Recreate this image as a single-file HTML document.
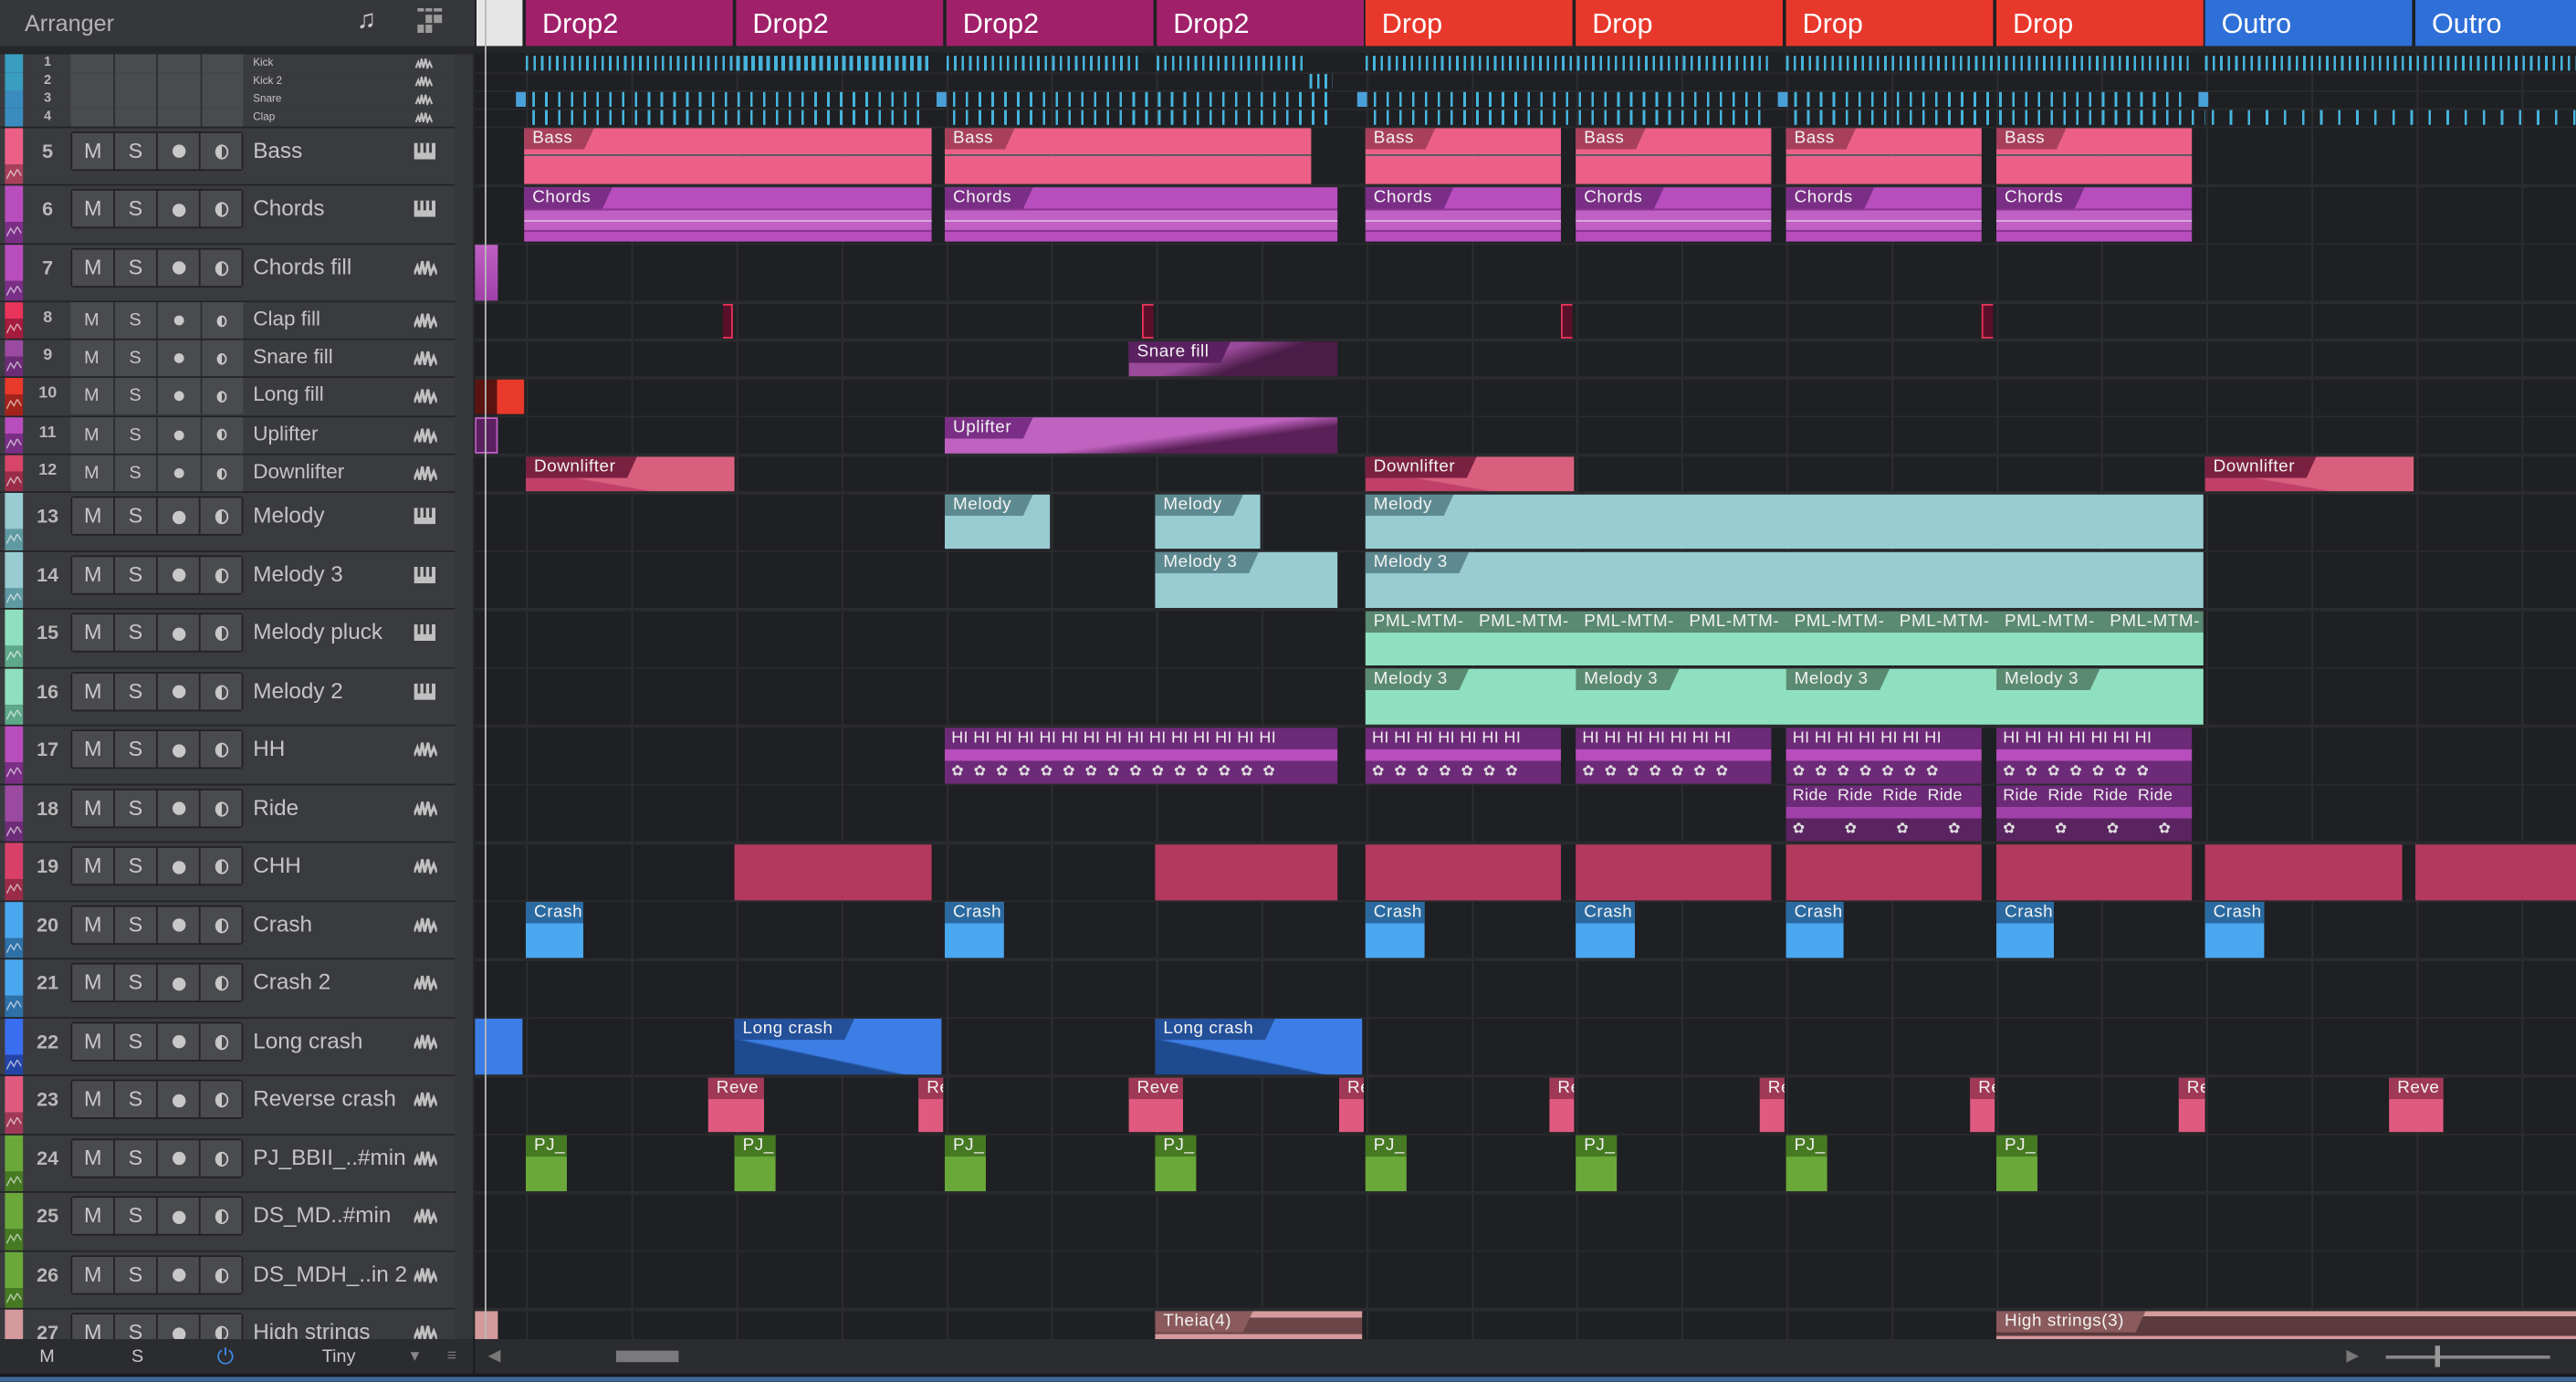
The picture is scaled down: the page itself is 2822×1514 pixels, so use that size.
<!DOCTYPE html>
<html><head><meta charset="utf-8"><style>
*{margin:0;padding:0;box-sizing:border-box}
body{width:2822px;height:1514px;overflow:hidden;background:#1f2023;font-family:"Liberation Sans",sans-serif}
#w{position:absolute;left:0;top:0;width:1568px;height:841px;transform:scale(1.8);transform-origin:0 0;background:#1f2023;overflow:hidden}
.tl{position:absolute;left:289px;top:32px;width:1279px;height:783px;background-color:#1f2023;background-image:repeating-linear-gradient(90deg,transparent 0 30.5px,#2e2f33 30.5px 31.5px,transparent 31.5px 63.9px);background-position:1px 0}
.hs{position:absolute;left:0;width:1568px;height:1.5px;background:#2a2b2e}
.tr{position:absolute;left:0;width:277px;background:#3a3b3f}
.sep{position:absolute;left:277px;width:11px;background:#35363a}
.st{position:absolute;left:3px;width:11px}
.n{position:absolute;left:16px;width:26px;text-align:center;color:#b8b8b8;font-weight:bold;font-size:12px}
.bx{position:absolute;left:43px;width:105px;display:flex;border:1px solid #222;border-radius:2px;background:#222}
.bx u{flex:1;text-decoration:none;background:#4a4b4f;color:#c8c8c8;text-align:center;margin-right:1px;font-size:13px}
.bx u:last-child{margin-right:0}
.sm .bx{border:none;background:#2c2d30}
.sm .bx u{font-size:11px}
.nm{position:absolute;left:154px;color:#c4c4c4;font-size:13.5px;white-space:nowrap}
.ic{position:absolute;left:252px}
.c{position:absolute;overflow:hidden}
.c i{position:absolute;left:0;top:0;height:13px;padding:0 13px 0 5px;font-style:normal;font-size:10.5px;line-height:13px;color:#f2f2f2;white-space:nowrap;clip-path:polygon(0 0,100% 0,calc(100% - 6px) 100%,0 100%);letter-spacing:.3px}
.sec{position:absolute;top:0;height:28px;width:126px;color:#fff;font-size:17px;line-height:29px;padding-left:10px}
.dot{display:inline-block;width:8px;height:8px;border-radius:50%;background:#c8c8c8;vertical-align:middle}
.sm .dot{width:6px;height:6px}
.mon{display:inline-block;width:8px;height:9px;border-radius:50%;border:1.3px solid #c8c8c8;background:linear-gradient(90deg,#c8c8c8 50%,transparent 50%);vertical-align:middle}
.sm .mon{width:6px;height:7px}
.hh{font-size:10px;color:#eee;white-space:nowrap;position:absolute;left:4px;top:1px;letter-spacing:.2px}
.gear{font-size:9px;color:#ddd;white-space:nowrap;position:absolute;left:4px;bottom:2px;letter-spacing:6px}
.sq{position:absolute;left:4px;width:9px;height:6px}
</style></head><body><div id="w">
<svg width="0" height="0" style="position:absolute"><defs>
<symbol id="wv" viewBox="0 0 14 10"><path d="M0 9 L2 4 L3.5 9 L5 1 L6.5 9 L8.5 1 L10 9 L12 4 L14 9" fill="none" stroke="#c0c0c0" stroke-width="1.6"/></symbol>
<symbol id="pn" viewBox="0 0 13 10"><rect x="0" y="0" width="13" height="10" fill="#c0c0c0"/><path d="M3 0V6M6.5 0V6M10 0V6" stroke="#3a3b3f" stroke-width="1.6"/></symbol>
<symbol id="sg" viewBox="0 0 9 6"><path d="M0 6 L2.5 1 L4.5 4 L6.5 0 L9 4" fill="none" stroke="#fff" stroke-opacity=".6" stroke-width=".8"/></symbol>
</defs></svg>
<!-- header -->
<div style="position:absolute;left:0;top:0;width:289px;height:28px;background:#36373b"></div>
<div style="position:absolute;left:15px;top:6px;color:#b4b4b4;font-size:14px">Arranger</div>
<div style="position:absolute;left:217px;top:4px;color:#c8c8c8;font-size:16px">♫</div>
<svg style="position:absolute;left:254px;top:5px" width="16" height="16"><g fill="#9a9a9a"><rect x="0" y="0" width="4" height="2"/><rect x="5" y="0" width="4" height="2"/><rect x="10" y="0" width="5" height="2"/><rect x="5" y="4" width="4" height="5"/><rect x="10" y="4" width="5" height="5"/><rect x="0" y="10" width="4" height="5"/><rect x="5" y="10" width="4" height="5"/></g></svg>
<div style="position:absolute;left:0;top:28px;width:1568px;height:5px;background:#26272a"></div>
<div style="position:absolute;left:290px;top:0;width:28px;height:28px;background:#e6e6e6"></div>
<div class="sec" style="left:320px;background:#a0206a">Drop2</div>
<div class="sec" style="left:448px;background:#a0206a">Drop2</div>
<div class="sec" style="left:576px;background:#a0206a">Drop2</div>
<div class="sec" style="left:704px;background:#a0206a">Drop2</div>
<div class="sec" style="left:831px;background:#e8382c">Drop</div>
<div class="sec" style="left:959px;background:#e8382c">Drop</div>
<div class="sec" style="left:1087px;background:#e8382c">Drop</div>
<div class="sec" style="left:1215px;background:#e8382c">Drop</div>
<div class="sec" style="left:1342px;background:#2f6fd8">Outro</div>
<div class="sec" style="left:1470px;width:98px;background:#2f6fd8">Outro</div>

<div class="tl"></div>
<div class="hs" style="top:43.5px"></div><div class="hs" style="top:54.5px"></div><div class="hs" style="top:65.5px"></div><div class="hs" style="top:76.5px"></div><div class="hs" style="top:112px"></div><div class="hs" style="top:147.5px"></div><div class="hs" style="top:183px"></div><div class="hs" style="top:206px"></div><div class="hs" style="top:229px"></div><div class="hs" style="top:252.5px"></div><div class="hs" style="top:276px"></div><div class="hs" style="top:299px"></div><div class="hs" style="top:334.5px"></div><div class="hs" style="top:370px"></div><div class="hs" style="top:405.5px"></div><div class="hs" style="top:441px"></div><div class="hs" style="top:476.5px"></div><div class="hs" style="top:512px"></div><div class="hs" style="top:547.5px"></div><div class="hs" style="top:583px"></div><div class="hs" style="top:618.5px"></div><div class="hs" style="top:654px"></div><div class="hs" style="top:689.5px"></div><div class="hs" style="top:725px"></div><div class="hs" style="top:760.5px"></div><div class="hs" style="top:796px"></div>

<!-- drum ticks rows 1-4 -->
<div class="c" style="left:320px;top:34px;width:245px;height:9px;background:repeating-linear-gradient(90deg,#46b4dc 0 1.5px,transparent 1.5px 4.6px)"></div>
<div class="c" style="left:448px;top:34px;width:117px;height:9px;background:repeating-linear-gradient(90deg,#46b4dc 0 1.5px,transparent 1.5px 4.6px)"></div>
<div class="c" style="left:576px;top:34px;width:118px;height:9px;background:repeating-linear-gradient(90deg,#46b4dc 0 1.5px,transparent 1.5px 4.6px)"></div>
<div class="c" style="left:704px;top:34px;width:92px;height:9px;background:repeating-linear-gradient(90deg,#46b4dc 0 1.5px,transparent 1.5px 4.6px)"></div>
<div class="c" style="left:797px;top:45px;width:14px;height:9px;background:repeating-linear-gradient(90deg,#46b4dc 0 1.5px,transparent 1.5px 4.6px)"></div>
<div class="c" style="left:831px;top:34px;width:245px;height:9px;background:repeating-linear-gradient(90deg,#46b4dc 0 1.5px,transparent 1.5px 4.6px)"></div>
<div class="c" style="left:1087px;top:34px;width:245px;height:9px;background:repeating-linear-gradient(90deg,#46b4dc 0 1.5px,transparent 1.5px 4.6px)"></div>
<div class="c" style="left:1342px;top:34px;width:226px;height:9px;background:repeating-linear-gradient(90deg,#46b4dc 0 1.5px,transparent 1.5px 4.6px)"></div>
<div class="c" style="left:314px;top:56px;width:6px;height:9px;background:#4aa0d8"></div>
<div class="c" style="left:324px;top:56px;width:240px;height:9px;background:repeating-linear-gradient(90deg,#46b4dc 0 1.5px,transparent 1.5px 7.8px)"></div>
<div class="c" style="left:570px;top:56px;width:6px;height:9px;background:#4aa0d8"></div>
<div class="c" style="left:580px;top:56px;width:230px;height:9px;background:repeating-linear-gradient(90deg,#46b4dc 0 1.5px,transparent 1.5px 7.8px)"></div>
<div class="c" style="left:826px;top:56px;width:6px;height:9px;background:#4aa0d8"></div>
<div class="c" style="left:836px;top:56px;width:240px;height:9px;background:repeating-linear-gradient(90deg,#46b4dc 0 1.5px,transparent 1.5px 7.8px)"></div>
<div class="c" style="left:1082px;top:56px;width:6px;height:9px;background:#4aa0d8"></div>
<div class="c" style="left:1092px;top:56px;width:240px;height:9px;background:repeating-linear-gradient(90deg,#46b4dc 0 1.5px,transparent 1.5px 7.8px)"></div>
<div class="c" style="left:1338px;top:56px;width:6px;height:9px;background:#4aa0d8"></div>
<div class="c" style="left:324px;top:67px;width:240px;height:9px;background:repeating-linear-gradient(90deg,#46b4dc 0 1.5px,transparent 1.5px 7.8px)"></div>
<div class="c" style="left:580px;top:67px;width:230px;height:9px;background:repeating-linear-gradient(90deg,#46b4dc 0 1.5px,transparent 1.5px 7.8px)"></div>
<div class="c" style="left:836px;top:67px;width:240px;height:9px;background:repeating-linear-gradient(90deg,#46b4dc 0 1.5px,transparent 1.5px 7.8px)"></div>
<div class="c" style="left:1092px;top:67px;width:250px;height:9px;background:repeating-linear-gradient(90deg,#46b4dc 0 1.5px,transparent 1.5px 7.8px)"></div>
<div class="c" style="left:1346px;top:67px;width:222px;height:9px;background:repeating-linear-gradient(90deg,#46b4dc 0 1.5px,transparent 1.5px 11px)"></div>

<!-- Bass row 5 -->
<div class="c" style="left:319px;top:78px;width:248px;height:34px;background:linear-gradient(#ec6088 0 16px,#fff4 16px 17px,#ec6088 17px)"><i style="background:#a8405c">Bass</i></div>
<div class="c" style="left:575px;top:78px;width:223px;height:34px;background:linear-gradient(#ec6088 0 16px,#fff4 16px 17px,#ec6088 17px)"><i style="background:#a8405c">Bass</i></div>
<div class="c" style="left:831px;top:78px;width:119px;height:34px;background:linear-gradient(#ec6088 0 16px,#fff4 16px 17px,#ec6088 17px)"><i style="background:#a8405c">Bass</i></div>
<div class="c" style="left:959px;top:78px;width:119px;height:34px;background:linear-gradient(#ec6088 0 16px,#fff4 16px 17px,#ec6088 17px)"><i style="background:#a8405c">Bass</i></div>
<div class="c" style="left:1087px;top:78px;width:119px;height:34px;background:linear-gradient(#ec6088 0 16px,#fff4 16px 17px,#ec6088 17px)"><i style="background:#a8405c">Bass</i></div>
<div class="c" style="left:1215px;top:78px;width:119px;height:34px;background:linear-gradient(#ec6088 0 16px,#fff4 16px 17px,#ec6088 17px)"><i style="background:#a8405c">Bass</i></div>
<!-- Chords row 6 -->
<div class="c" style="left:319px;top:114px;width:248px;height:33px;background:linear-gradient(#b84dbd 0 13px,#8a3490 13px 14px,#c060c4 14px 20px,#d8a8e0 20px 21px,#c060c4 21px 26px,#8a3490 26px 27px,#b84dbd 27px)"><i style="background:#7a2e86">Chords</i></div>
<div class="c" style="left:575px;top:114px;width:239px;height:33px;background:linear-gradient(#b84dbd 0 13px,#8a3490 13px 14px,#c060c4 14px 20px,#d8a8e0 20px 21px,#c060c4 21px 26px,#8a3490 26px 27px,#b84dbd 27px)"><i style="background:#7a2e86">Chords</i></div>
<div class="c" style="left:831px;top:114px;width:119px;height:33px;background:linear-gradient(#b84dbd 0 13px,#8a3490 13px 14px,#c060c4 14px 20px,#d8a8e0 20px 21px,#c060c4 21px 26px,#8a3490 26px 27px,#b84dbd 27px)"><i style="background:#7a2e86">Chords</i></div>
<div class="c" style="left:959px;top:114px;width:119px;height:33px;background:linear-gradient(#b84dbd 0 13px,#8a3490 13px 14px,#c060c4 14px 20px,#d8a8e0 20px 21px,#c060c4 21px 26px,#8a3490 26px 27px,#b84dbd 27px)"><i style="background:#7a2e86">Chords</i></div>
<div class="c" style="left:1087px;top:114px;width:119px;height:33px;background:linear-gradient(#b84dbd 0 13px,#8a3490 13px 14px,#c060c4 14px 20px,#d8a8e0 20px 21px,#c060c4 21px 26px,#8a3490 26px 27px,#b84dbd 27px)"><i style="background:#7a2e86">Chords</i></div>
<div class="c" style="left:1215px;top:114px;width:119px;height:33px;background:linear-gradient(#b84dbd 0 13px,#8a3490 13px 14px,#c060c4 14px 20px,#d8a8e0 20px 21px,#c060c4 21px 26px,#8a3490 26px 27px,#b84dbd 27px)"><i style="background:#7a2e86">Chords</i></div>
<div class="c" style="left:289px;top:149px;width:14px;height:34px;background:linear-gradient(#c060c4,#a040a8)"></div>
<div class="c" style="left:440px;top:185px;width:6px;height:21px;border:1.5px solid #e8335a;border-left:none;background:#5a1028"></div>
<div class="c" style="left:695px;top:185px;width:7px;height:21px;border:1.5px solid #e8335a;border-right:none;background:#5a1028"></div>
<div class="c" style="left:950px;top:185px;width:7px;height:21px;border:1.5px solid #e8335a;border-right:none;background:#5a1028"></div>
<div class="c" style="left:1206px;top:185px;width:7px;height:21px;border:1.5px solid #e8335a;border-right:none;background:#5a1028"></div>
<div class="c" style="left:687px;top:208px;width:127px;height:21px;background:linear-gradient(160deg,#9a4a9a 40%,#4a1c48 60%)"><i style="background:#5a2060">Snare fill</i></div>
<div class="c" style="left:289px;top:231px;width:30px;height:21px;background:linear-gradient(90deg,#5a1410 0 45%,#e8392b 45%)"></div>
<div class="c" style="left:289px;top:254px;width:14px;height:22px;background:#5a2060;border:1.5px solid #c060c4"></div>
<div class="c" style="left:575px;top:254px;width:239px;height:22px;background:linear-gradient(172deg,#c062c0 55%,#5a2058 70%)"><i style="background:#7a2e86">Uplifter</i></div>
<div class="c" style="left:320px;top:278px;width:127px;height:21px;background:linear-gradient(10deg,#c0406a 30%,#d8607e 32%)"><i style="background:#7a2040">Downlifter</i></div>
<div class="c" style="left:831px;top:278px;width:127px;height:21px;background:linear-gradient(10deg,#c0406a 30%,#d8607e 32%)"><i style="background:#7a2040">Downlifter</i></div>
<div class="c" style="left:1342px;top:278px;width:127px;height:21px;background:linear-gradient(10deg,#c0406a 30%,#d8607e 32%)"><i style="background:#7a2040">Downlifter</i></div>
<div class="c" style="left:575px;top:301px;width:64px;height:33px;background:#99cbd3"><i style="background:#5d8a90">Melody</i></div>
<div class="c" style="left:703px;top:301px;width:64px;height:33px;background:#99cbd3"><i style="background:#5d8a90">Melody</i></div>
<div class="c" style="left:831px;top:301px;width:510px;height:33px;background:#99cbd3"><i style="background:#5d8a90">Melody</i></div>
<div class="c" style="left:703px;top:336px;width:111px;height:34px;background:#99cbd3"><i style="background:#5d8a90">Melody 3</i></div>
<div class="c" style="left:831px;top:336px;width:510px;height:34px;background:#99cbd3"><i style="background:#5d8a90">Melody 3</i></div>
<div class="c" style="left:831px;top:372px;width:510px;height:33px;background:linear-gradient(#5a8a72 0 13px,#8fe0c0 13px)">
<i style="left:0;background:none">PML-MTM-</i><i style="left:64px;background:none">PML-MTM-</i><i style="left:128px;background:none">PML-MTM-</i><i style="left:192px;background:none">PML-MTM-</i><i style="left:256px;background:none">PML-MTM-</i><i style="left:320px;background:none">PML-MTM-</i><i style="left:384px;background:none">PML-MTM-</i><i style="left:448px;background:none">PML-MTM-</i></div>
<div class="c" style="left:831px;top:407px;width:510px;height:34px;background:#8fe0c0">
<i style="background:#5a8a72">Melody 3</i><i style="left:128px;background:#5a8a72">Melody 3</i><i style="left:256px;background:#5a8a72">Melody 3</i><i style="left:384px;background:#5a8a72">Melody 3</i></div>
<div class="c" style="left:575px;top:443px;width:239px;height:34px;background:linear-gradient(#6d2a78 0 13px,#b84dbd 13px 20px,#6d2a78 20px)"><span class="hh">HI HI HI HI HI HI HI HI HI HI HI HI HI HI HI</span><span class="gear">✿✿✿✿✿✿✿✿✿✿✿✿✿✿✿</span></div>
<div class="c" style="left:831px;top:443px;width:119px;height:34px;background:linear-gradient(#6d2a78 0 13px,#b84dbd 13px 20px,#6d2a78 20px)"><span class="hh">HI HI HI HI HI HI HI</span><span class="gear">✿✿✿✿✿✿✿</span></div>
<div class="c" style="left:959px;top:443px;width:119px;height:34px;background:linear-gradient(#6d2a78 0 13px,#b84dbd 13px 20px,#6d2a78 20px)"><span class="hh">HI HI HI HI HI HI HI</span><span class="gear">✿✿✿✿✿✿✿</span></div>
<div class="c" style="left:1087px;top:443px;width:119px;height:34px;background:linear-gradient(#6d2a78 0 13px,#b84dbd 13px 20px,#6d2a78 20px)"><span class="hh">HI HI HI HI HI HI HI</span><span class="gear">✿✿✿✿✿✿✿</span></div>
<div class="c" style="left:1215px;top:443px;width:119px;height:34px;background:linear-gradient(#6d2a78 0 13px,#b84dbd 13px 20px,#6d2a78 20px)"><span class="hh">HI HI HI HI HI HI HI</span><span class="gear">✿✿✿✿✿✿✿</span></div>
<div class="c" style="left:1087px;top:478px;width:119px;height:34px;background:linear-gradient(#6d2a78 0 13px,#a040a8 13px 20px,#5a2460 20px)"><span class="hh" style="word-spacing:3px">Ride Ride Ride Ride</span><span class="gear" style="letter-spacing:24px">✿✿✿✿</span></div>
<div class="c" style="left:1215px;top:478px;width:119px;height:34px;background:linear-gradient(#6d2a78 0 13px,#a040a8 13px 20px,#5a2460 20px)"><span class="hh" style="word-spacing:3px">Ride Ride Ride Ride</span><span class="gear" style="letter-spacing:24px">✿✿✿✿</span></div>
<div class="c" style="left:447px;top:514px;width:120px;height:34px;background:#b33a5e"></div>
<div class="c" style="left:703px;top:514px;width:111px;height:34px;background:#b33a5e"></div>
<div class="c" style="left:831px;top:514px;width:119px;height:34px;background:#b33a5e"></div>
<div class="c" style="left:959px;top:514px;width:119px;height:34px;background:#b33a5e"></div>
<div class="c" style="left:1087px;top:514px;width:119px;height:34px;background:#b33a5e"></div>
<div class="c" style="left:1215px;top:514px;width:119px;height:34px;background:#b33a5e"></div>
<div class="c" style="left:1342px;top:514px;width:120px;height:34px;background:#b33a5e"></div>
<div class="c" style="left:1470px;top:514px;width:98px;height:34px;background:#b33a5e"></div>
<div class="c" style="left:320px;top:549px;width:35px;height:34px;background:#4aa8f0"><i style="background:#2a6aa0">Crash</i></div>
<div class="c" style="left:575px;top:549px;width:36px;height:34px;background:#4aa8f0"><i style="background:#2a6aa0">Crash</i></div>
<div class="c" style="left:831px;top:549px;width:36px;height:34px;background:#4aa8f0"><i style="background:#2a6aa0">Crash</i></div>
<div class="c" style="left:959px;top:549px;width:36px;height:34px;background:#4aa8f0"><i style="background:#2a6aa0">Crash</i></div>
<div class="c" style="left:1087px;top:549px;width:35px;height:34px;background:#4aa8f0"><i style="background:#2a6aa0">Crash</i></div>
<div class="c" style="left:1215px;top:549px;width:35px;height:34px;background:#4aa8f0"><i style="background:#2a6aa0">Crash</i></div>
<div class="c" style="left:1342px;top:549px;width:36px;height:34px;background:#4aa8f0"><i style="background:#2a6aa0">Crash</i></div>
<div class="c" style="left:289px;top:620px;width:29px;height:34px;background:#3c7ee6"></div>
<div class="c" style="left:447px;top:620px;width:126px;height:34px;background:linear-gradient(12deg,#1e4a90 35%,#3c7ee6 37%)"><i style="background:#24509a">Long crash</i></div>
<div class="c" style="left:703px;top:620px;width:126px;height:34px;background:linear-gradient(12deg,#1e4a90 35%,#3c7ee6 37%)"><i style="background:#24509a">Long crash</i></div>
<div class="c" style="left:431px;top:656px;width:34px;height:33px;background:#e05a80"><i style="background:#a03858">Reve</i></div>
<div class="c" style="left:559px;top:656px;width:15px;height:33px;background:#e05a80"><i style="background:#a03858">Re</i></div>
<div class="c" style="left:687px;top:656px;width:33px;height:33px;background:#e05a80"><i style="background:#a03858">Reve</i></div>
<div class="c" style="left:815px;top:656px;width:15px;height:33px;background:#e05a80"><i style="background:#a03858">Re</i></div>
<div class="c" style="left:943px;top:656px;width:15px;height:33px;background:#e05a80"><i style="background:#a03858">Re</i></div>
<div class="c" style="left:1071px;top:656px;width:15px;height:33px;background:#e05a80"><i style="background:#a03858">Re</i></div>
<div class="c" style="left:1199px;top:656px;width:15px;height:33px;background:#e05a80"><i style="background:#a03858">Re</i></div>
<div class="c" style="left:1326px;top:656px;width:16px;height:33px;background:#e05a80"><i style="background:#a03858">Re</i></div>
<div class="c" style="left:1454px;top:656px;width:33px;height:33px;background:#e05a80"><i style="background:#a03858">Reve</i></div>
<div class="c" style="left:320px;top:691px;width:25px;height:34px;background:#6aa83a"><i style="background:#467a22">PJ_</i></div>
<div class="c" style="left:447px;top:691px;width:25px;height:34px;background:#6aa83a"><i style="background:#467a22">PJ_</i></div>
<div class="c" style="left:575px;top:691px;width:25px;height:34px;background:#6aa83a"><i style="background:#467a22">PJ_</i></div>
<div class="c" style="left:703px;top:691px;width:25px;height:34px;background:#6aa83a"><i style="background:#467a22">PJ_</i></div>
<div class="c" style="left:831px;top:691px;width:25px;height:34px;background:#6aa83a"><i style="background:#467a22">PJ_</i></div>
<div class="c" style="left:959px;top:691px;width:25px;height:34px;background:#6aa83a"><i style="background:#467a22">PJ_</i></div>
<div class="c" style="left:1087px;top:691px;width:25px;height:34px;background:#6aa83a"><i style="background:#467a22">PJ_</i></div>
<div class="c" style="left:1215px;top:691px;width:25px;height:34px;background:#6aa83a"><i style="background:#467a22">PJ_</i></div>
<div class="c" style="left:289px;top:798px;width:14px;height:17px;background:#d49a9c"></div>
<div class="c" style="left:703px;top:798px;width:126px;height:17px;background:linear-gradient(#d49a9c 0 4px,#6a4446 4px 14px,#d49a9c 14px)"><i style="background:#8a5a5c">Theia(4)</i></div>
<div class="c" style="left:1215px;top:798px;width:353px;height:17px;background:linear-gradient(#d49a9c 0 3px,#5a3a3c 3px 15px,#d49a9c 15px)"><i style="background:#8a5a5c">High strings(3)</i></div>

<div style="position:absolute;left:295px;top:0;width:1px;height:815px;background:#b8b8b8"></div>

<!-- track panel -->
<div style="position:absolute;left:0;top:33px;width:289px;height:782px;background:#232427"></div>
<div class="sep" style="top:33px;height:782px"></div>

<div class="tr" style="top:33px;height:10.5px"><b class="st" style="top:0;height:10.5px;background:#3a9ec0"></b><span class="n" style="font-size:8px;line-height:10.5px">1</span><div class="bx" style="top:0;height:10.5px;border:none;background:#2c2d30"><u></u><u></u><u></u><u></u></div><span class="nm" style="font-size:6.5px;line-height:11px">Kick</span><svg class="ic" style="top:2px" width="12" height="7"><use href="#wv"/></svg></div>
<div class="tr" style="top:44px;height:10.5px"><b class="st" style="top:0;height:10.5px;background:#3a9ec0"></b><span class="n" style="font-size:8px;line-height:10.5px">2</span><div class="bx" style="top:0;height:10.5px;border:none;background:#2c2d30"><u></u><u></u><u></u><u></u></div><span class="nm" style="font-size:6.5px;line-height:11px">Kick 2</span><svg class="ic" style="top:2px" width="12" height="7"><use href="#wv"/></svg></div>
<div class="tr" style="top:55px;height:10.5px"><b class="st" style="top:0;height:10.5px;background:#3a8cc0"></b><span class="n" style="font-size:8px;line-height:10.5px">3</span><div class="bx" style="top:0;height:10.5px;border:none;background:#2c2d30"><u></u><u></u><u></u><u></u></div><span class="nm" style="font-size:6.5px;line-height:11px">Snare</span><svg class="ic" style="top:2px" width="12" height="7"><use href="#wv"/></svg></div>
<div class="tr" style="top:66px;height:10.5px"><b class="st" style="top:0;height:10.5px;background:#3a8cc0"></b><span class="n" style="font-size:8px;line-height:10.5px">4</span><div class="bx" style="top:0;height:10.5px;border:none;background:#2c2d30"><u></u><u></u><u></u><u></u></div><span class="nm" style="font-size:6.5px;line-height:11px">Clap</span><svg class="ic" style="top:2px" width="12" height="7"><use href="#wv"/></svg></div>

<div class="tr" style="top:77.5px;height:34.5px"><b class="st" style="top:0;height:22px;background:#ec6088"></b><b class="st" style="top:22px;height:12.5px;background:#a8405c"></b><svg class="sq" style="top:25px"><use href="#sg"/></svg><span class="n" style="top:7px">5</span><div class="bx" style="top:2px;height:24px"><u style="line-height:22px">M</u><u style="line-height:22px">S</u><u style="line-height:22px"><span class="dot"></span></u><u style="line-height:22px"><span class="mon"></span></u></div><span class="nm" style="top:6px">Bass</span><svg class="ic" style="top:9px" width="13" height="10"><use href="#pn"/></svg></div>
<div class="tr" style="top:113px;height:34.5px"><b class="st" style="top:0;height:22px;background:#b84dbd"></b><b class="st" style="top:22px;height:12.5px;background:#7a2e86"></b><svg class="sq" style="top:25px"><use href="#sg"/></svg><span class="n" style="top:7px">6</span><div class="bx" style="top:2px;height:24px"><u style="line-height:22px">M</u><u style="line-height:22px">S</u><u style="line-height:22px"><span class="dot"></span></u><u style="line-height:22px"><span class="mon"></span></u></div><span class="nm" style="top:6px">Chords</span><svg class="ic" style="top:9px" width="13" height="10"><use href="#pn"/></svg></div>
<div class="tr" style="top:148.5px;height:34.5px"><b class="st" style="top:0;height:22px;background:#b84dbd"></b><b class="st" style="top:22px;height:12.5px;background:#7a2e86"></b><svg class="sq" style="top:25px"><use href="#sg"/></svg><span class="n" style="top:7px">7</span><div class="bx" style="top:2px;height:24px"><u style="line-height:22px">M</u><u style="line-height:22px">S</u><u style="line-height:22px"><span class="dot"></span></u><u style="line-height:22px"><span class="mon"></span></u></div><span class="nm" style="top:6px">Chords fill</span><svg class="ic" style="top:9px" width="14" height="10"><use href="#wv"/></svg></div>

<div class="tr sm" style="top:184px;height:22px"><b class="st" style="top:0;height:10px;background:#e8335a"></b><b class="st" style="top:10px;height:12px;background:#a51c3e"></b><svg class="sq" style="top:13px"><use href="#sg"/></svg><span class="n" style="top:4px;font-size:10px">8</span><div class="bx" style="top:0;height:22px"><u style="line-height:22px">M</u><u style="line-height:22px">S</u><u style="line-height:22px"><span class="dot"></span></u><u style="line-height:22px"><span class="mon"></span></u></div><span class="nm" style="top:3px;font-size:12.5px">Clap fill</span><svg class="ic" style="top:6px" width="14" height="10"><use href="#wv"/></svg></div>
<div class="tr sm" style="top:207px;height:22px"><b class="st" style="top:0;height:10px;background:#9a4aa0"></b><b class="st" style="top:10px;height:12px;background:#6d2c78"></b><svg class="sq" style="top:13px"><use href="#sg"/></svg><span class="n" style="top:4px;font-size:10px">9</span><div class="bx" style="top:0;height:22px"><u style="line-height:22px">M</u><u style="line-height:22px">S</u><u style="line-height:22px"><span class="dot"></span></u><u style="line-height:22px"><span class="mon"></span></u></div><span class="nm" style="top:3px;font-size:12.5px">Snare fill</span><svg class="ic" style="top:6px" width="14" height="10"><use href="#wv"/></svg></div>
<div class="tr sm" style="top:230px;height:22.5px"><b class="st" style="top:0;height:10px;background:#e8392b"></b><b class="st" style="top:10px;height:12.5px;background:#a3231b"></b><svg class="sq" style="top:13px"><use href="#sg"/></svg><span class="n" style="top:4px;font-size:10px">10</span><div class="bx" style="top:0;height:22px"><u style="line-height:22px">M</u><u style="line-height:22px">S</u><u style="line-height:22px"><span class="dot"></span></u><u style="line-height:22px"><span class="mon"></span></u></div><span class="nm" style="top:3px;font-size:12.5px">Long fill</span><svg class="ic" style="top:6px" width="14" height="10"><use href="#wv"/></svg></div>
<div class="tr sm" style="top:253.5px;height:22.5px"><b class="st" style="top:0;height:10px;background:#b84dbd"></b><b class="st" style="top:10px;height:12.5px;background:#7a2e86"></b><svg class="sq" style="top:13px"><use href="#sg"/></svg><span class="n" style="top:4px;font-size:10px">11</span><div class="bx" style="top:0;height:22px"><u style="line-height:22px">M</u><u style="line-height:22px">S</u><u style="line-height:22px"><span class="dot"></span></u><u style="line-height:22px"><span class="mon"></span></u></div><span class="nm" style="top:3px;font-size:12.5px">Uplifter</span><svg class="ic" style="top:6px" width="14" height="10"><use href="#wv"/></svg></div>
<div class="tr sm" style="top:277px;height:22px"><b class="st" style="top:0;height:10px;background:#d8456a"></b><b class="st" style="top:10px;height:12px;background:#9a2c48"></b><svg class="sq" style="top:13px"><use href="#sg"/></svg><span class="n" style="top:4px;font-size:10px">12</span><div class="bx" style="top:0;height:22px"><u style="line-height:22px">M</u><u style="line-height:22px">S</u><u style="line-height:22px"><span class="dot"></span></u><u style="line-height:22px"><span class="mon"></span></u></div><span class="nm" style="top:3px;font-size:12.5px">Downlifter</span><svg class="ic" style="top:6px" width="14" height="10"><use href="#wv"/></svg></div>

<div class="tr" style="top:300px;height:34.5px"><b class="st" style="top:0;height:22px;background:#99cbd3"></b><b class="st" style="top:22px;height:12.5px;background:#5f9aa3"></b><svg class="sq" style="top:25px"><use href="#sg"/></svg><span class="n" style="top:7px">13</span><div class="bx" style="top:2px;height:24px"><u style="line-height:22px">M</u><u style="line-height:22px">S</u><u style="line-height:22px"><span class="dot"></span></u><u style="line-height:22px"><span class="mon"></span></u></div><span class="nm" style="top:6px">Melody</span><svg class="ic" style="top:9px" width="13" height="10"><use href="#pn"/></svg></div>
<div class="tr" style="top:335.5px;height:34.5px"><b class="st" style="top:0;height:22px;background:#99cbd3"></b><b class="st" style="top:22px;height:12.5px;background:#5f9aa3"></b><svg class="sq" style="top:25px"><use href="#sg"/></svg><span class="n" style="top:7px">14</span><div class="bx" style="top:2px;height:24px"><u style="line-height:22px">M</u><u style="line-height:22px">S</u><u style="line-height:22px"><span class="dot"></span></u><u style="line-height:22px"><span class="mon"></span></u></div><span class="nm" style="top:6px">Melody 3</span><svg class="ic" style="top:9px" width="13" height="10"><use href="#pn"/></svg></div>
<div class="tr" style="top:371px;height:34.5px"><b class="st" style="top:0;height:22px;background:#8fe0c0"></b><b class="st" style="top:22px;height:12.5px;background:#5ea88a"></b><svg class="sq" style="top:25px"><use href="#sg"/></svg><span class="n" style="top:7px">15</span><div class="bx" style="top:2px;height:24px"><u style="line-height:22px">M</u><u style="line-height:22px">S</u><u style="line-height:22px"><span class="dot"></span></u><u style="line-height:22px"><span class="mon"></span></u></div><span class="nm" style="top:6px">Melody pluck</span><svg class="ic" style="top:9px" width="13" height="10"><use href="#pn"/></svg></div>
<div class="tr" style="top:406.5px;height:34.5px"><b class="st" style="top:0;height:22px;background:#8fe0c0"></b><b class="st" style="top:22px;height:12.5px;background:#5ea88a"></b><svg class="sq" style="top:25px"><use href="#sg"/></svg><span class="n" style="top:7px">16</span><div class="bx" style="top:2px;height:24px"><u style="line-height:22px">M</u><u style="line-height:22px">S</u><u style="line-height:22px"><span class="dot"></span></u><u style="line-height:22px"><span class="mon"></span></u></div><span class="nm" style="top:6px">Melody 2</span><svg class="ic" style="top:9px" width="13" height="10"><use href="#pn"/></svg></div>
<div class="tr" style="top:442px;height:34.5px"><b class="st" style="top:0;height:22px;background:#b84dbd"></b><b class="st" style="top:22px;height:12.5px;background:#7a2e86"></b><svg class="sq" style="top:25px"><use href="#sg"/></svg><span class="n" style="top:7px">17</span><div class="bx" style="top:2px;height:24px"><u style="line-height:22px">M</u><u style="line-height:22px">S</u><u style="line-height:22px"><span class="dot"></span></u><u style="line-height:22px"><span class="mon"></span></u></div><span class="nm" style="top:6px">HH</span><svg class="ic" style="top:9px" width="14" height="10"><use href="#wv"/></svg></div>
<div class="tr" style="top:477.5px;height:34.5px"><b class="st" style="top:0;height:22px;background:#9a4aa0"></b><b class="st" style="top:22px;height:12.5px;background:#6d2c78"></b><svg class="sq" style="top:25px"><use href="#sg"/></svg><span class="n" style="top:7px">18</span><div class="bx" style="top:2px;height:24px"><u style="line-height:22px">M</u><u style="line-height:22px">S</u><u style="line-height:22px"><span class="dot"></span></u><u style="line-height:22px"><span class="mon"></span></u></div><span class="nm" style="top:6px">Ride</span><svg class="ic" style="top:9px" width="14" height="10"><use href="#wv"/></svg></div>
<div class="tr" style="top:513px;height:34.5px"><b class="st" style="top:0;height:22px;background:#d8406a"></b><b class="st" style="top:22px;height:12.5px;background:#9a2c48"></b><svg class="sq" style="top:25px"><use href="#sg"/></svg><span class="n" style="top:7px">19</span><div class="bx" style="top:2px;height:24px"><u style="line-height:22px">M</u><u style="line-height:22px">S</u><u style="line-height:22px"><span class="dot"></span></u><u style="line-height:22px"><span class="mon"></span></u></div><span class="nm" style="top:6px">CHH</span><svg class="ic" style="top:9px" width="14" height="10"><use href="#wv"/></svg></div>
<div class="tr" style="top:548.5px;height:34.5px"><b class="st" style="top:0;height:22px;background:#4aa8f0"></b><b class="st" style="top:22px;height:12.5px;background:#2e70a8"></b><svg class="sq" style="top:25px"><use href="#sg"/></svg><span class="n" style="top:7px">20</span><div class="bx" style="top:2px;height:24px"><u style="line-height:22px">M</u><u style="line-height:22px">S</u><u style="line-height:22px"><span class="dot"></span></u><u style="line-height:22px"><span class="mon"></span></u></div><span class="nm" style="top:6px">Crash</span><svg class="ic" style="top:9px" width="14" height="10"><use href="#wv"/></svg></div>
<div class="tr" style="top:584px;height:34.5px"><b class="st" style="top:0;height:22px;background:#4aa8f0"></b><b class="st" style="top:22px;height:12.5px;background:#2e70a8"></b><svg class="sq" style="top:25px"><use href="#sg"/></svg><span class="n" style="top:7px">21</span><div class="bx" style="top:2px;height:24px"><u style="line-height:22px">M</u><u style="line-height:22px">S</u><u style="line-height:22px"><span class="dot"></span></u><u style="line-height:22px"><span class="mon"></span></u></div><span class="nm" style="top:6px">Crash 2</span><svg class="ic" style="top:9px" width="14" height="10"><use href="#wv"/></svg></div>
<div class="tr" style="top:619.5px;height:34.5px"><b class="st" style="top:0;height:22px;background:#3a6ef0"></b><b class="st" style="top:22px;height:12.5px;background:#2445a8"></b><svg class="sq" style="top:25px"><use href="#sg"/></svg><span class="n" style="top:7px">22</span><div class="bx" style="top:2px;height:24px"><u style="line-height:22px">M</u><u style="line-height:22px">S</u><u style="line-height:22px"><span class="dot"></span></u><u style="line-height:22px"><span class="mon"></span></u></div><span class="nm" style="top:6px">Long crash</span><svg class="ic" style="top:9px" width="14" height="10"><use href="#wv"/></svg></div>
<div class="tr" style="top:655px;height:34.5px"><b class="st" style="top:0;height:22px;background:#e05a80"></b><b class="st" style="top:22px;height:12.5px;background:#a03858"></b><svg class="sq" style="top:25px"><use href="#sg"/></svg><span class="n" style="top:7px">23</span><div class="bx" style="top:2px;height:24px"><u style="line-height:22px">M</u><u style="line-height:22px">S</u><u style="line-height:22px"><span class="dot"></span></u><u style="line-height:22px"><span class="mon"></span></u></div><span class="nm" style="top:6px">Reverse crash</span><svg class="ic" style="top:9px" width="14" height="10"><use href="#wv"/></svg></div>
<div class="tr" style="top:690.5px;height:34.5px"><b class="st" style="top:0;height:22px;background:#6aa83a"></b><b class="st" style="top:22px;height:12.5px;background:#467a22"></b><svg class="sq" style="top:25px"><use href="#sg"/></svg><span class="n" style="top:7px">24</span><div class="bx" style="top:2px;height:24px"><u style="line-height:22px">M</u><u style="line-height:22px">S</u><u style="line-height:22px"><span class="dot"></span></u><u style="line-height:22px"><span class="mon"></span></u></div><span class="nm" style="top:6px">PJ_BBII_..#min</span><svg class="ic" style="top:9px" width="14" height="10"><use href="#wv"/></svg></div>
<div class="tr" style="top:726px;height:34.5px"><b class="st" style="top:0;height:22px;background:#6aa83a"></b><b class="st" style="top:22px;height:12.5px;background:#467a22"></b><svg class="sq" style="top:25px"><use href="#sg"/></svg><span class="n" style="top:7px">25</span><div class="bx" style="top:2px;height:24px"><u style="line-height:22px">M</u><u style="line-height:22px">S</u><u style="line-height:22px"><span class="dot"></span></u><u style="line-height:22px"><span class="mon"></span></u></div><span class="nm" style="top:6px">DS_MD..#min</span><svg class="ic" style="top:9px" width="14" height="10"><use href="#wv"/></svg></div>
<div class="tr" style="top:761.5px;height:34.5px"><b class="st" style="top:0;height:22px;background:#6aa83a"></b><b class="st" style="top:22px;height:12.5px;background:#467a22"></b><svg class="sq" style="top:25px"><use href="#sg"/></svg><span class="n" style="top:7px">26</span><div class="bx" style="top:2px;height:24px"><u style="line-height:22px">M</u><u style="line-height:22px">S</u><u style="line-height:22px"><span class="dot"></span></u><u style="line-height:22px"><span class="mon"></span></u></div><span class="nm" style="top:6px">DS_MDH_..in 2</span><svg class="ic" style="top:9px" width="14" height="10"><use href="#wv"/></svg></div>
<div class="tr" style="top:797px;height:18px;overflow:hidden"><b class="st" style="top:0;height:18px;background:#d49a9c"></b><span class="n" style="top:7px">27</span><div class="bx" style="top:2px;height:24px"><u style="line-height:22px">M</u><u style="line-height:22px">S</u><u style="line-height:22px"><span class="dot"></span></u><u style="line-height:22px"><span class="mon"></span></u></div><span class="nm" style="top:6px">High strings</span><svg class="ic" style="top:9px" width="14" height="10"><use href="#wv"/></svg></div>

<!-- bottom bar -->
<div style="position:absolute;left:0;top:815px;width:1568px;height:22px;background:#2b2c2f"></div>
<div style="position:absolute;left:288px;top:815px;width:1px;height:22px;background:#1a1a1c"></div>
<div style="position:absolute;left:24px;top:820px;color:#c8c8c8;font-size:11px">M</div>
<div style="position:absolute;left:80px;top:820px;color:#c8c8c8;font-size:11px">S</div>
<div style="position:absolute;left:132px;top:818px;color:#3d8ce8;font-size:13px">⏻</div>
<div style="position:absolute;left:196px;top:820px;color:#c8c8c8;font-size:11px">Tiny</div>
<div style="position:absolute;left:248px;top:820px;color:#888;font-size:9px">▼</div>
<div style="position:absolute;left:272px;top:820px;color:#777;font-size:10px">≡</div>
<div style="position:absolute;left:297px;top:820px;color:#777;font-size:10px">◀</div>
<div style="position:absolute;left:375px;top:822px;width:38px;height:7px;background:#7a7a7c"></div>
<div style="position:absolute;left:1428px;top:820px;color:#777;font-size:10px">▶</div>
<div style="position:absolute;left:1452px;top:825px;width:100px;height:2px;background:#888"></div>
<div style="position:absolute;left:1482px;top:819px;width:3px;height:13px;background:#999"></div>
<div style="position:absolute;left:0;top:836px;width:1568px;height:2px;background:#1a1a1c"></div>
<div style="position:absolute;left:0;top:838px;width:1568px;height:3px;background:#40699a"></div>
</div></body></html>
